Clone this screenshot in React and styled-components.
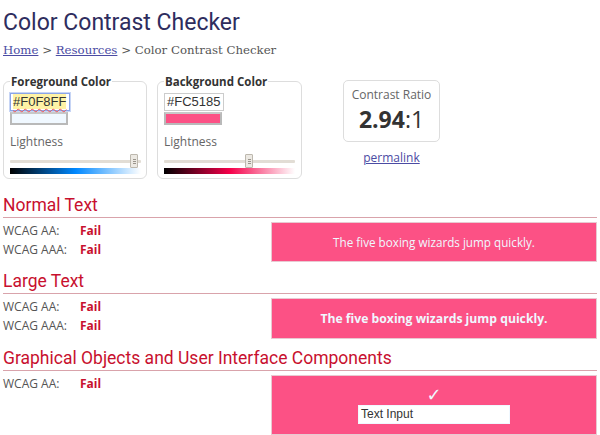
import React from "react";
import styled, { createGlobalStyle } from "styled-components";

const Global = createGlobalStyle`
  html, body { margin: 0; padding: 0; background: #fff; }
  body { font-family: "Open Sans", sans-serif; }
  * { box-sizing: border-box; }
`;

const Page = styled.div`
  padding: 0 3px;
  width: 600px;
`;

const Title = styled.h1`
  margin: 0;
  padding-top: 8px;
  font-family: Roboto, sans-serif;
  font-weight: 400;
  font-size: 23px;
  line-height: 30px;
  color: #2e2d5e;
`;

const Breadcrumb = styled.div`
  margin-top: 4px;
  font-family: "DejaVu Serif", serif;
  font-size: 11.75px;
  line-height: 16px;
  color: #555;
`;

const Crumb = styled.a`
  color: #4b4ba3;
  text-decoration: underline;
`;

const TopRow = styled.div`
  display: flex;
  align-items: flex-start;
  margin-top: 16px;
`;

const Fieldset = styled.fieldset`
  margin: 0 10px 0 0;
  width: ${(p) => p.$w}px;
  padding: 4px 6px 4px 6px;
  border: 1px solid #ddd;
  border-radius: 6px;
  min-width: 0;
`;

const Legend = styled.legend`
  padding: 0 1px;
  font-weight: 700;
  font-size: 11.5px;
  color: #333;
`;

const HexInput = styled.div`
  width: 60px;
  height: 18px;
  border: 1px solid ${(p) => (p.$focus ? "#8aa5e8" : "#ccc")};
  box-shadow: ${(p) => (p.$focus ? "0 0 0 1px #c7d5f5" : "none")};
  padding: 0 2px;
  font-family: "Liberation Sans", Arial, sans-serif;
  font-size: 13px;
  line-height: 16px;
  color: #333;
  background: #fff;
`;

const Hl = styled.span`
  background: ${(p) => (p.$on ? "#fff3a6" : "transparent")};
  text-decoration: ${(p) => (p.$on ? "underline wavy #e55" : "none")};
  text-decoration-thickness: 1px;
  text-underline-offset: 2px;
`;

const Swatch = styled.div`
  width: 58px;
  height: 13px;
  margin-top: 1px;
  background: ${(p) => p.$c};
  border: 2px solid #b9b9b9;
  border-top-color: #c8c8c8;
`;

const Label = styled.div`
  margin-top: 9px;
  font-size: 12px;
  line-height: 16px;
  color: #666;
`;

const Slider = styled.div`
  position: relative;
  margin-top: 4px;
  height: 14px;
  width: 131px;
`;

const Track = styled.div`
  position: absolute;
  left: 0;
  right: 0;
  top: 6px;
  height: 3px;
  background: #e2ddd5;
  border-radius: 1px;
`;

const Thumb = styled.div`
  position: absolute;
  top: 0;
  width: 8px;
  height: 14px;
  margin-left: -4px;
  background: #ece9e3;
  border: 1px solid #bdb8ae;
  border-radius: 1px;
  display: flex;
  flex-direction: column;
  justify-content: center;
  align-items: center;
  gap: 1px;
`;

const Grip = styled.span`
  width: 3px;
  height: 1px;
  background: #9a958c;
`;

const Gradient = styled.div`
  width: 131px;
  height: 6px;
  background: linear-gradient(to right, #000, ${(p) => p.$mid}, #fff);
`;

const RatioCol = styled.div`
  margin-left: 31px;
  margin-top: 6px;
  display: flex;
  flex-direction: column;
  align-items: center;
`;

const RatioBox = styled.div`
  width: 97px;
  height: 62px;
  border: 1px solid #ddd;
  border-radius: 5px;
  display: flex;
  flex-direction: column;
  align-items: center;
  padding-top: 6px;
`;

const RatioLabel = styled.div`
  font-size: 12px;
  line-height: 16px;
  color: #666;
`;

const RatioValue = styled.div`
  margin-top: 3px;
  font-size: 23px;
  line-height: 26px;
  color: #333;
`;

const Strong = styled.b`
  font-weight: 700;
`;

const Permalink = styled.a`
  margin-top: 8px;
  font-size: 12px;
  line-height: 16px;
  color: #4b4ba3;
  text-decoration: underline;
`;

const Section = styled.section`
  margin-top: ${(p) => p.$mt}px;
`;

const Heading = styled.h2`
  margin: 0;
  font-family: Roboto, sans-serif;
  font-weight: 400;
  font-size: 17.5px;
  line-height: 20px;
  color: #c8102e;
  border-bottom: 1px solid #d9a3ab;
  padding-bottom: 2px;
`;

const Body = styled.div`
  display: flex;
  margin-top: 4px;
`;

const Results = styled.div`
  width: 268px;
  display: flex;
  flex-direction: column;
  gap: 2px;
`;

const ResultRow = styled.div`
  display: flex;
  font-size: 12px;
  line-height: 17px;
  color: #555;
`;

const RowLabel = styled.span`
  width: 77px;
`;

const Fail = styled.span`
  font-weight: 700;
  color: #c8102e;
`;

const Sample = styled.div`
  width: 326px;
  height: ${(p) => p.$h}px;
  background: #fc5185;
  border: 1px solid #e8c9d1;
  color: #f0f8ff;
  display: flex;
  flex-direction: column;
  align-items: center;
  justify-content: center;
  font-size: ${(p) => (p.$large ? 12.2 : 11.7)}px;
  font-weight: ${(p) => (p.$large ? 700 : 400)};
`;

const Check = styled.div`
  font-family: "DejaVu Sans", sans-serif;
  font-size: 18px;
  line-height: 18px;
  color: #f0f8ff;
`;

const TextInput = styled.div`
  margin-top: 1px;
  width: 152px;
  height: 19px;
  background: #fff;
  border: 1px solid #f0f8ff;
  padding: 0 2px;
  font-family: "Liberation Sans", Arial, sans-serif;
  font-size: 12px;
  line-height: 17px;
  color: #333;
`;

function ColorField({ title, hex, color, focus, pos, mid, w }) {
  return (
    <Fieldset $w={w}>
      <Legend>{title}</Legend>
      <HexInput $focus={focus}>
        <Hl $on={focus}>{hex}</Hl>
      </HexInput>
      <Swatch $c={color} />
      <Label>Lightness</Label>
      <Slider>
        <Track />
        <Thumb style={{ left: `${pos}%` }}>
          <Grip />
          <Grip />
          <Grip />
        </Thumb>
      </Slider>
      <Gradient $mid={mid} />
    </Fieldset>
  );
}

function ResultList({ rows }) {
  return (
    <Results>
      {rows.map((r) => (
        <ResultRow key={r}>
          <RowLabel>{r}</RowLabel>
          <Fail>Fail</Fail>
        </ResultRow>
      ))}
    </Results>
  );
}

export default function App() {
  return (
    <Page>
      <Global />
      <Title>Color Contrast Checker</Title>
      <Breadcrumb>
        <Crumb href="#">Home</Crumb> &gt; <Crumb href="#">Resources</Crumb> &gt; Color Contrast Checker
      </Breadcrumb>
      <TopRow>
        <ColorField w={144} title="Foreground Color" hex="#F0F8FF" color="#f0f8ff" focus pos={95} mid="hsl(208,100%,50%)" />
        <ColorField w={145} title="Background Color" hex="#FC5185" color="#fc5185" pos={65} mid="hsl(342,100%,48%)" />
        <RatioCol>
          <RatioBox>
            <RatioLabel>Contrast Ratio</RatioLabel>
            <RatioValue>
              <Strong>2.94</Strong>:1
            </RatioValue>
          </RatioBox>
          <Permalink href="#">permalink</Permalink>
        </RatioCol>
      </TopRow>

      <Section $mt={16}>
        <Heading>Normal Text</Heading>
        <Body>
          <ResultList rows={["WCAG AA:", "WCAG AAA:"]} />
          <Sample $h={40}>The five boxing wizards jump quickly.</Sample>
        </Body>
      </Section>

      <Section $mt={9}>
        <Heading>Large Text</Heading>
        <Body>
          <ResultList rows={["WCAG AA:", "WCAG AAA:"]} />
          <Sample $h={41} $large>The five boxing wizards jump quickly.</Sample>
        </Body>
      </Section>

      <Section $mt={9}>
        <Heading>Graphical Objects and User Interface Components</Heading>
        <Body>
          <ResultList rows={["WCAG AA:"]} />
          <Sample $h={60}>
            <Check>✓</Check>
            <TextInput>Text Input</TextInput>
          </Sample>
        </Body>
      </Section>
    </Page>
  );
}
